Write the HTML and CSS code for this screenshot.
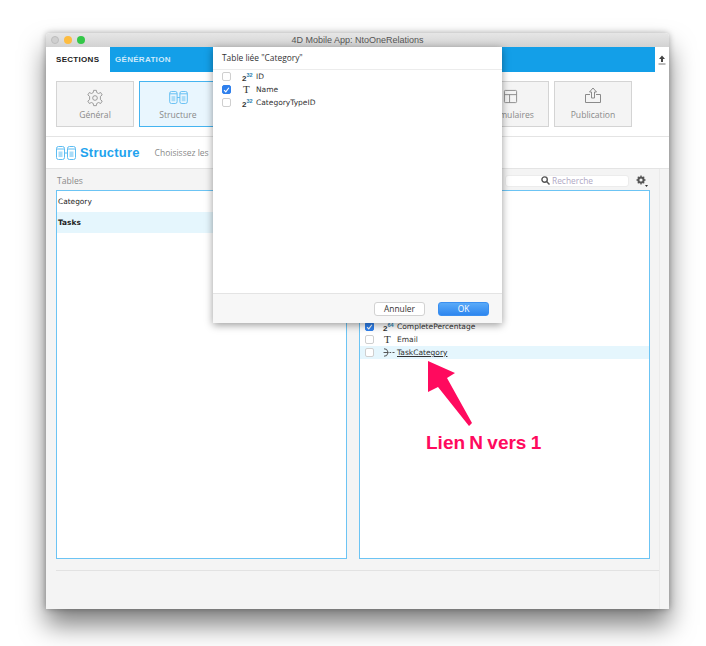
FILE: index.html
```html
<!DOCTYPE html>
<html lang="fr">
<head>
  <meta charset="UTF-8">
  <meta name="viewport" content="width=device-width, initial-scale=1.0">
  <title>4D Mobile App: NtoOneRelations</title>
  <link rel="stylesheet" href="styles.css">
</head>
<body>
  <div class="window">
    <div class="titlebar">
      <span class="dot dot-gray"></span>
      <span class="dot dot-yellow"></span>
      <span class="dot dot-green"></span>
      <span class="title">4D Mobile App: NtoOneRelations</span>
    </div>

    <div class="tabs">
      <div class="tab tab-active">SECTIONS</div>
      <div class="tab-bar"><span class="tab-gen">GÉNÉRATION</span></div>
      <div class="tab-side">
        <svg width="8" height="10" viewBox="0 0 8 10"><path d="M4 0.5 L7 4 H5 V7 H3 V4 H1 Z" fill="#444"/><path d="M0.5 9 H7.5" stroke="#777" stroke-width="1"/></svg>
      </div>
    </div>

    <div class="sections">
      <div class="section">
        <svg class="section-icon icon-gear" width="18" height="18" viewBox="0 0 20 20" fill="none" stroke="#8a8a8a" stroke-width="0.9"><path d="M8.5 1.5 H11.5 L12 4 L14 5 L16.3 3.9 L18 6.6 L16 8.2 V11.8 L18 13.4 L16.3 16.1 L14 15 L12 16 L11.5 18.5 H8.5 L8 16 L6 15 L3.7 16.1 L2 13.4 L4 11.8 V8.2 L2 6.6 L3.7 3.9 L6 5 L8 4 Z" stroke-linejoin="round"/><circle cx="10" cy="10" r="2.6"/></svg>
        <span>Général</span>
      </div>
      <div class="section section-active">
        <svg class="section-icon" width="19" height="13" viewBox="0 0 20 14" fill="none" stroke="#5dbcf2"><rect x="0.5" y="0.5" width="8" height="13" rx="2"/><rect x="11.5" y="0.5" width="8" height="13" rx="2"/><path d="M0.5 3 H8.5 M11.5 3 H19.5 M8.5 7 H11.5"/><rect x="2.5" y="5.5" width="4" height="5.5" fill="#a9dcf8" stroke="none"/><rect x="13.5" y="5.5" width="4" height="5.5" fill="#a9dcf8" stroke="none"/></svg>
        <span>Structure</span>
      </div>
      <!-- these three sit behind the dialog -->
      <div class="section"></div>
      <div class="section"></div>
      <div class="section"></div>
      <div class="section">
        <svg class="section-icon" width="15" height="15" viewBox="0 0 16 16" fill="none" stroke="#8a8a8a"><rect x="1.5" y="1.5" width="13" height="13" rx="1"/><path d="M1.5 6 H14.5 M7 6 V14.5"/></svg>
        <span>Formulaires</span>
      </div>
      <div class="section">
        <svg class="section-icon" width="18" height="17" viewBox="0 0 18 17" fill="none" stroke="#8a8a8a"><path d="M6 7.5 H1.5 V15.5 H16.5 V7.5 H12"/><path d="M9 1 L12.5 5 H10.5 V11 H7.5 V5 H5.5 Z" stroke-linejoin="round"/></svg>
        <span>Publication</span>
      </div>
    </div>

    <div class="heading">
      <svg width="20" height="14" viewBox="0 0 20 14" fill="none" stroke="#5dbcf2"><rect x="0.5" y="0.5" width="8" height="13" rx="2"/><rect x="11.5" y="0.5" width="8" height="13" rx="2"/><path d="M0.5 3 H8.5 M11.5 3 H19.5 M8.5 7 H11.5"/><rect x="2.5" y="5.5" width="4" height="5.5" fill="#a9dcf8" stroke="none"/><rect x="13.5" y="5.5" width="4" height="5.5" fill="#a9dcf8" stroke="none"/></svg>
      <span class="heading-title">Structure</span>
      <span class="heading-sub">Choisissez les</span>
    </div>

    <div class="content">
      <div class="content-main">
        <div class="columns">
          <div class="column">
            <div class="column-head"><span class="column-label">Tables</span></div>
            <div class="panel">
              <div class="table-row">Category</div>
              <div class="table-row table-row-selected">Tasks</div>
            </div>
          </div>
          <div class="column">
            <div class="column-head column-head-right">
              <div class="search">
                <svg width="9" height="9" viewBox="0 0 9 9" fill="none" stroke="#555" stroke-width="1.4"><circle cx="3.6" cy="3.6" r="2.7"/><path d="M5.6 5.6 L8.5 8.5"/></svg>
                <span>Recherche</span>
              </div>
              <div class="gear">
                <svg width="12" height="12" viewBox="0 0 12 12"><circle cx="5" cy="5" r="2.6" fill="none" stroke="#555" stroke-width="2"/><path d="M5 0.5 V2 M5 8 V9.5 M0.5 5 H2 M8 5 H9.5 M1.8 1.8 L2.9 2.9 M7.1 7.1 L8.2 8.2 M1.8 8.2 L2.9 7.1 M7.1 2.9 L8.2 1.8" stroke="#555" stroke-width="1.3"/><path d="M9 10 H12 L10.5 12 Z" fill="#333"/></svg>
              </div>
            </div>
            <div class="panel">
              <div class="field-list">
                <div class="field"><span class="check check-on"><svg width="8" height="8" viewBox="0 0 8 8" fill="none" stroke="#fff" stroke-width="1.3"><path d="M1.2 4.2 L3.2 6.2 L6.8 1.4"/></svg></span><span class="type">2<sup>64</sup></span><span>CompletePercentage</span></div>
                <div class="field"><span class="check"></span><span class="type type-t">T</span><span>Email</span></div>
                <div class="field field-selected"><span class="check"></span><span class="type type-link">
                  <svg width="12" height="9" viewBox="0 0 12 9" fill="none" stroke="#444" stroke-width="0.9"><path d="M1 0.8 L3.6 1.4 L5.2 4.5 L3.6 7.6 L1 8.2 M0.5 4.5 H5.2 M6.5 4.5 H8.2 M9.5 4.5 H11.5"/></svg>
                </span><span class="link-name">TaskCategory</span></div>
              </div>
            </div>
          </div>
        </div>
        <div class="footer-line"></div>
      </div>
      <div class="content-rail"></div>
    </div>

    <div class="dialog">
      <div class="dialog-head">Table liée "Category"</div>
      <div class="dialog-list">
        <div class="field"><span class="check"></span><span class="type">2<sup>32</sup></span><span>ID</span></div>
        <div class="field"><span class="check check-on"><svg width="8" height="8" viewBox="0 0 8 8" fill="none" stroke="#fff" stroke-width="1.3"><path d="M1.2 4.2 L3.2 6.2 L6.8 1.4"/></svg></span><span class="type type-t">T</span><span>Name</span></div>
        <div class="field"><span class="check"></span><span class="type">2<sup>32</sup></span><span>CategoryTypeID</span></div>
      </div>
      <div class="dialog-foot">
        <button class="btn" type="button">Annuler</button>
        <button class="btn btn-ok" type="button">OK</button>
      </div>
    </div>
  </div>

  <svg class="arrow" width="50" height="70" viewBox="0 0 50 70"><polygon points="3,1 30,13 22,18 47,63 44,66 13,27 3,32" fill="#ff0a5e"/></svg>
  <div class="arrow-label">Lien N vers 1</div>
</body>
</html>
```

FILE: styles.css
```css
* {
  box-sizing: border-box;
}

body {
  margin: 0;
  min-height: 100vh;
  padding-top: 33px;
  background-color: white;
  font-family: "Open Sans", "Liberation Sans", Arial, sans-serif;
}

.window {
  position: relative;
  width: 623px;
  height: 576px;
  margin-left: 46px;
  display: flex;
  flex-direction: column;
  background-color: white;
  box-shadow: 0 16px 26px rgba(0, 0, 0, 0.5), 0 0 6px rgba(0, 0, 0, 0.3);
  border-radius: 4px 4px 0 0;
}

.titlebar {
  height: 14px;
  display: flex;
  align-items: center;
  gap: 5px;
  padding-left: 5px;
  background: linear-gradient(#e6e6e6, #d2d2d2);
  border-radius: 4px 4px 0 0;
  position: relative;
}

.dot {
  width: 8px;
  height: 8px;
  border-radius: 50%;
}

.dot-gray { background-color: #cfcfcf; border: 1px solid #bdbdbd; }
.dot-yellow { background-color: #fdbc40; }
.dot-green { background-color: #33c748; }

.title {
  position: absolute;
  left: 0;
  right: 0;
  top: 0;
  text-align: center;
  font-family: "Liberation Sans", Arial, sans-serif;
  font-size: 9px;
  line-height: 14px;
  color: #555;
}

.tabs {
  height: 25px;
  display: flex;
  font-family: "Liberation Sans", Arial, sans-serif;
}

.tab {
  font-size: 8px;
  font-weight: 700;
  letter-spacing: 0.3px;
  line-height: 26px;
}

.tab-active {
  width: 64px;
  padding-left: 10px;
  color: #222;
}

.tab-bar {
  flex: 1;
  background-color: #139fe8;
  padding-left: 5px;
  font-size: 8px;
  font-weight: 700;
  letter-spacing: 0.3px;
  line-height: 26px;
  color: #cdeafb;
}

.tab-side {
  width: 14px;
  display: flex;
  align-items: center;
  justify-content: center;
}

.sections {
  height: 65px;
  display: flex;
  gap: 5px;
  padding: 9px 0 0 10px;
  border-bottom: 1px solid #e4e4e4;
}

.section {
  width: 78px;
  height: 46px;
  display: flex;
  flex-direction: column;
  align-items: center;
  justify-content: flex-end;
  padding-bottom: 5px;
  background-color: #f4f4f4;
  border: 1px solid #d4d4d4;
  font-size: 8.6px;
  color: #8a8a8a;
  flex-shrink: 0;
}

.section-icon {
  margin-bottom: 5px;
}

.icon-gear {
  margin-bottom: 2px;
}

.section-active {
  background-color: #e9f6fe;
  border-color: #45b4f0;
}

.heading {
  height: 32px;
  display: flex;
  align-items: center;
  padding-left: 10px;
  border-bottom: 1px solid #e4e4e4;
}

.heading-title {
  margin-left: 4px;
  font-family: "Liberation Sans", Arial, sans-serif;
  font-size: 13px;
  font-weight: 700;
  letter-spacing: 0.2px;
  color: #22a3ee;
}

.heading-sub {
  margin-left: 15px;
  font-size: 8.5px;
  color: #8a8a8a;
}

.content {
  flex: 1;
  display: flex;
  background-color: #f4f4f4;
}

.content-main {
  flex: 1;
  padding: 6px 0 0 10px;
}

.content-rail {
  width: 10px;
  border-left: 1px solid #ebebeb;
}

.columns {
  display: flex;
  gap: 12px;
}

.column {
  width: 291px;
}

.column-head {
  height: 15px;
  padding-bottom: 3px;
  display: flex;
  align-items: center;
}

.column-label {
  padding-left: 1px;
  font-size: 8.6px;
  color: #8a8a8a;
}

.column-head-right {
  justify-content: flex-end;
  padding-right: 1px;
}

.search {
  width: 124px;
  height: 12px;
  margin-right: 7px;
  padding-bottom: 1px;
  display: flex;
  align-items: center;
  justify-content: center;
  gap: 2px;
  background-color: white;
  border: 1px solid #ececec;
  border-radius: 3px;
  font-size: 8.4px;
  color: #b0a8c4;
}

.gear {
  width: 13px;
  height: 12px;
}

.gear svg {
  display: block;
}

.panel {
  height: 369px;
  background-color: white;
  border: 1px solid #6cc4f4;
}

.table-row {
  height: 21px;
  padding-left: 1px;
  font-family: "DejaVu Sans", sans-serif;
  font-size: 7.4px;
  line-height: 21px;
  color: #222;
}

.table-row-selected {
  background-color: #e5f6fd;
  font-weight: 700;
}

/* the first rows of the list are covered by the dialog */
.field-list {
  padding-top: 129px;
}

.field {
  height: 13px;
  display: flex;
  align-items: center;
  font-family: "DejaVu Sans", sans-serif;
  font-size: 7.5px;
  color: #333;
}

.field-selected {
  background-color: #e5f6fd;
}

.check {
  width: 9px;
  height: 9px;
  margin-left: 5px;
  display: flex;
  align-items: center;
  justify-content: center;
  background-color: white;
  border: 1px solid #cfcfcf;
  border-radius: 2px;
}

.check-on {
  background-color: #2f80ed;
  border-color: #2f80ed;
}

.type {
  width: 14px;
  margin-left: 9px;
  padding-top: 3px;
  font-family: "Liberation Sans", Arial, sans-serif;
  font-size: 8px;
  font-weight: 700;
  line-height: 13px;
  white-space: nowrap;
  color: #333;
}

.type sup {
  font-size: 5.5px;
  line-height: 0;
  color: #2a7fb0;
}

.type-t {
  padding-top: 0;
  padding-left: 1px;
  font-family: "Liberation Serif", serif;
  font-size: 11px;
  font-weight: 400;
}

.type-link {
  padding-top: 0;
  display: flex;
  align-items: center;
}

.link-name {
  text-decoration: underline;
}

.footer-line {
  height: 1px;
  margin-top: 11px;
  background-color: #e2e2e2;
}

.dialog {
  position: absolute;
  left: 167px;
  top: 14px;
  width: 289px;
  height: 276px;
  display: flex;
  flex-direction: column;
  background-color: white;
  box-shadow: 0 2px 8px rgba(0, 0, 0, 0.4);
}

.dialog-head {
  height: 23px;
  padding-left: 9px;
  border-bottom: 1px solid #ececec;
  font-size: 8.4px;
  line-height: 22px;
  color: #333;
}

.dialog-list {
  flex: 1;
}

.dialog-list .check {
  margin-left: 9px;
}

.dialog-list .type {
  margin-left: 11px;
  width: 14px;
}

.dialog-foot {
  height: 30px;
  display: flex;
  justify-content: flex-end;
  align-items: center;
  gap: 13px;
  padding-right: 13px;
  background-color: #f7f7f7;
  border-top: 1px solid #e4e4e4;
}

.btn {
  width: 51px;
  height: 14px;
  padding: 0;
  background-color: white;
  border: 1px solid #d2d2d2;
  border-radius: 3px;
  font-family: inherit;
  font-size: 8.4px;
  line-height: 12px;
  color: #333;
}

.btn-ok {
  background: linear-gradient(#5aaaf8, #2d86ef);
  border-color: #3a8ff0;
  color: white;
}

.arrow {
  position: absolute;
  left: 425px;
  top: 360px;
}

.arrow-label {
  position: absolute;
  left: 426px;
  top: 432px;
  font-family: "Liberation Sans", Arial, sans-serif;
  font-size: 19px;
  font-weight: 700;
  line-height: 21px;
  word-spacing: -1px;
  color: #ff0a5e;
}
```
